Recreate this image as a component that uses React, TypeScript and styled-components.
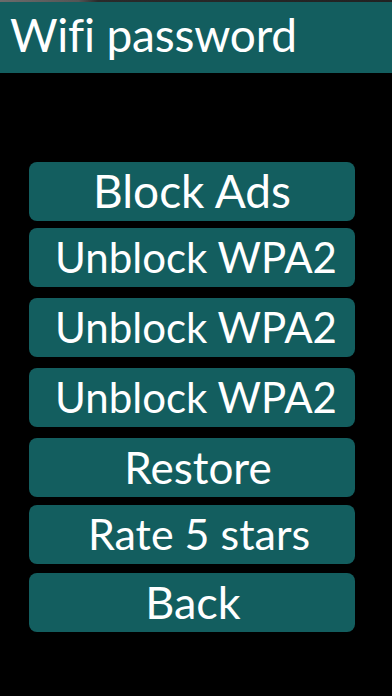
import React from "react";
import styled, { createGlobalStyle } from "styled-components";

const Global = createGlobalStyle`
  html, body {
    margin: 0;
    padding: 0;
    background: #000;
  }
  #root {
    width: 392px;
    height: 696px;
    background: #000;
  }
`;

const Page = styled.div`
  width: 392px;
  height: 696px;
  display: flex;
  flex-direction: column;
  background: #000;
  font-family: "Lato", "Open Sans", sans-serif;
  font-variant-ligatures: none;
  overflow: hidden;
`;

const StatusStrip = styled.div`
  height: 2px;
  background: linear-gradient(90deg, #6b6b6b 0%, #555 20%, #2a2a2a 25%, #222 100%);
`;

const Header = styled.header`
  height: 71px;
  background: #135e5f;
  display: flex;
  align-items: center;
  padding-left: 10px;
  box-sizing: border-box;
`;

const Title = styled.h1`
  margin: 0;
  color: #fff;
  font-weight: 400;
  font-size: 46px;
  letter-spacing: -0.2px;
  line-height: 1;
  padding-bottom: 6px;
`;

const Menu = styled.nav`
  display: flex;
  flex-direction: column;
  padding: 89px 37px 0 29px;
`;

const MenuButton = styled.button<{ $gap: number; $shift: number; $size: number }>`
  height: 59px;
  margin-top: ${(p) => p.$gap}px;
  border: none;
  border-radius: 8px;
  background: #135e5f;
  color: #fff;
  font-family: inherit;
  font-size: ${(p) => p.$size}px;
  font-weight: 400;
  display: flex;
  align-items: center;
  justify-content: center;
  padding: 0 0 2px ${(p) => p.$shift}px;
  white-space: nowrap;
  cursor: pointer;
`;

const items = [
  { label: "Block Ads", gap: 0, shift: 0, size: 46 },
  { label: "Unblock WPA2", gap: 7, shift: 8, size: 42 },
  { label: "Unblock WPA2", gap: 11, shift: 8, size: 42 },
  { label: "Unblock WPA2", gap: 11, shift: 8, size: 42 },
  { label: "Restore", gap: 11, shift: 12, size: 44 },
  { label: "Rate 5 stars", gap: 8, shift: 14, size: 43 },
  { label: "Back", gap: 9, shift: 2, size: 45 },
];

export default function App() {
  return (
    <>
      <Global />
      <Page>
        <StatusStrip />
        <Header>
          <Title>Wifi password</Title>
        </Header>
        <Menu>
          {items.map((it, i) => (
            <MenuButton key={i} $gap={it.gap} $shift={it.shift} $size={it.size}>
              {it.label}
            </MenuButton>
          ))}
        </Menu>
      </Page>
    </>
  );
}
